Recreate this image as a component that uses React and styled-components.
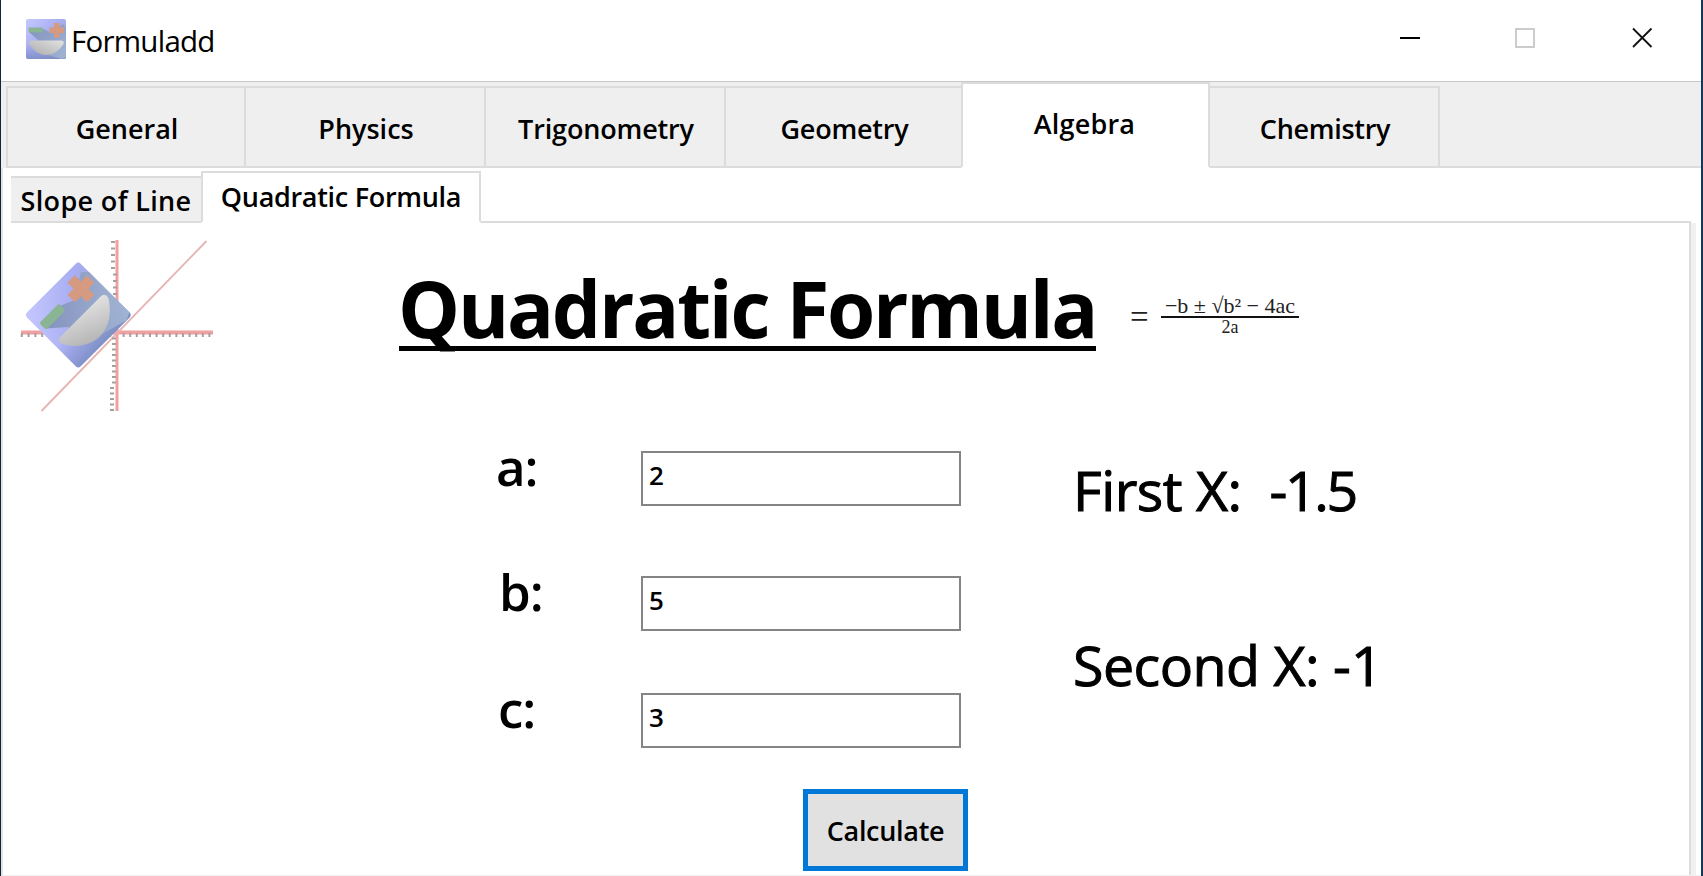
import React, { useState } from 'react';
import styled, { createGlobalStyle } from 'styled-components';

const mainTabs = [
    { name: 'General', width: 238, spacing: 0 },
    { name: 'Physics', width: 240, spacing: 0 },
    { name: 'Trigonometry', width: 240, spacing: -0.15 },
    { name: 'Geometry', width: 237, spacing: -0.2 },
    { name: 'Algebra', width: 249, spacing: 0.2 },
    { name: 'Chemistry', width: 230, spacing: -0.3 },
];

const subTabs = [
    { name: 'Slope of Line', width: 190, spacing: 0.35 },
    { name: 'Quadratic Formula', width: 280, spacing: -0.3 },
];

const ticks = [1, 2, 3, 4, 5, 6, 7, 8, 9, 10, 11, 12, 13, 14];

function BowlArt() {
    return (
        <>
            <defs>
                <linearGradient id="tile" x1="0" y1="0" x2="1" y2="1">
                    <stop offset="0" stopColor="#c5c8ff" />
                    <stop offset=".45" stopColor="#a9aef2" />
                    <stop offset="1" stopColor="#8fa3c8" />
                </linearGradient>
                <linearGradient id="tileEdge" x1="0" y1="0" x2="0" y2="1">
                    <stop offset="0" stopColor="#7d8fc4" stopOpacity="0" />
                    <stop offset="1" stopColor="#7386bd" stopOpacity=".7" />
                </linearGradient>
                <linearGradient id="shade" x1="0" y1="0" x2="1" y2="1">
                    <stop offset="0" stopColor="#7586ad" />
                    <stop offset=".5" stopColor="#8fa1c3" />
                    <stop offset="1" stopColor="#a9bbd8" />
                </linearGradient>
                <linearGradient id="bowl" x1="0" y1="1" x2="1" y2="0">
                    <stop offset="0" stopColor="#ababab" />
                    <stop offset="1" stopColor="#e2e2e2" />
                </linearGradient>
            </defs>
            <rect width="40" height="40" rx="2" fill="url(#tile)" />
            <rect y="24" width="40" height="16" rx="2" fill="url(#tileEdge)" />
            <path d="M3 13 L17 10 L24 13 L37 5 L40 8 V38 L36 40 L22 36 L5 26 L12 21 Z" fill="url(#shade)" opacity=".85" />
            <rect x="2.500" y="8.500" width="14.500" height="5" rx="1" fill="#8ab594" />
            <path d="M28 4 h5.500 v4.500 h4.500 v5.500 h-4.500 v4.500 h-5.500 v-4.500 h-4.500 v-5.500 h4.500 z" fill="#d59a80" />
            <path d="M3 24 Q2.500 21.500 6 21.500 H35 Q38.500 21.500 37.500 25 C33 32 27 36 20 36 C13 36 6 31 3 24 Z" fill="url(#bowl)" />
        </>
    );
}

export default function App() {
    const [mainTab, setMainTab] = useState('Algebra');
    const [subTab, setSubTab] = useState('Quadratic Formula');

    return (
        <Window>
            <GlobalStyle />
            <TitleBar>
                <AppIcon viewBox="0 0 40 40"><BowlArt /></AppIcon>
                <AppName>Formuladd</AppName>
                <WindowButtons viewBox="0 0 254 22">
                    <path d="M0 11 h20" stroke="#000" strokeWidth="2" />
                    <rect x="116" y="2" width="18" height="18" fill="none" stroke="#ccc" strokeWidth="2" />
                    <path d="M233 1.500 l18.500 18.500 M251.500 1.500 l-18.500 18.500" stroke="#111" strokeWidth="1.800" />
                </WindowButtons>
            </TitleBar>

            <MainTabs>
                {
                    mainTabs.map((tab) => (
                        <MainTab key={tab.name} $width={tab.width} $spacing={tab.spacing} $active={tab.name === mainTab} onClick={() => setMainTab(tab.name)}>
                            {tab.name}
                        </MainTab>
                    ))
                }
                <TabFiller />
            </MainTabs>

            <Body>
                <SubTabs>
                    {
                        subTabs.map((tab) => (
                            <SubTab key={tab.name} $width={tab.width} $spacing={tab.spacing} $active={tab.name === subTab} onClick={() => setSubTab(tab.name)}>
                                {tab.name}
                            </SubTab>
                        ))
                    }
                    <SubFiller />
                </SubTabs>

                <Panel>
                    <Logo viewBox="0 0 200 180">
                        <g fill="none" stroke="#f0a0a0">
                            <path d="M106 2 V173" strokeWidth="3" />
                            <path d="M10 94.500 H202" strokeWidth="4" />
                            <path d="M30.500 173 L195.500 3" strokeWidth="1.800" stroke="#e6b3b3" />
                        </g>
                        <g stroke="#a5a0a0" strokeWidth="2">
                            {
                                ticks.map((n) => (
                                    <React.Fragment key={n}>
                                        <path d={`M${106 + n * 6.6} 95 v4`} />
                                        <path d={`M${106 - n * 6.8} 95 v4`} />
                                        <path d={`M${n > 9 ? 100 : 102} ${95 - n * 6.5} h4`} />
                                        <path d={`M${n > 9 ? 99 : 101} ${95 + n * 5.5} h4`} />
                                    </React.Fragment>
                                ))
                            }
                        </g>
                        <g transform="translate(13.500 77) rotate(-45) scale(1.900)">
                            <BowlArt />
                        </g>
                    </Logo>

                    <Content>
                        <Heading>
                            <Title>Quadratic Formula</Title>
                            <Equation>
                                <Equals>=</Equals>
                                <Fraction>
                                    <Numerator>−b ± √b² − 4ac</Numerator>
                                    <Denominator>2a</Denominator>
                                </Fraction>
                            </Equation>
                        </Heading>

                        <Columns>
                            <Form>
                                <Field>
                                    <FieldLabel $shift={0}>a:</FieldLabel>
                                    <Input defaultValue="2" />
                                </Field>
                                <Field $gap={70}>
                                    <FieldLabel $shift={3}>b:</FieldLabel>
                                    <Input defaultValue="5" />
                                </Field>
                                <Field $gap={62}>
                                    <FieldLabel $shift={2}>c:</FieldLabel>
                                    <Input defaultValue="3" />
                                </Field>
                            </Form>
                            <Results>
                                <Result>First X:{'\u00a0 '}<Value $spacing={-2.4}>-1.5</Value></Result>
                                <Result>Second X: <Value $spacing={0}>-1</Value></Result>
                            </Results>
                        </Columns>
                        <Calculate>Calculate</Calculate>
                    </Content>
                </Panel>
            </Body>
        </Window>
    );
}

const GlobalStyle = createGlobalStyle`
    * {
        box-sizing: border-box;
    }
    body {
        margin: 0;
        overflow: hidden;
        font-family: "Open Sans", "Noto Sans", sans-serif;
        color: #000;
    }
`;

const Window = styled.div`
    width: 1703px;
    height: 876px;
    display: flex;
    flex-direction: column;
    border-left: 1px solid #14243a;
    border-right: 2px solid #14385c;
    background-color: #fff;
`;

const TitleBar = styled.header`
    height: 82px;
    flex-shrink: 0;
    display: flex;
    align-items: flex-start;
    padding: 19px 47px 0 25px;
    border-bottom: 1px solid #c4c8c8;
`;

const AppIcon = styled.svg`
    width: 40px;
    height: 40px;
    filter: blur(.5px);
`;

const AppName = styled.span`
    margin-left: 5px;
    font-size: 29.5px;
    line-height: 44px;
    letter-spacing: -.75px;
`;

const WindowButtons = styled.svg`
    width: 254px;
    height: 22px;
    margin: 8px 0 0 auto;
`;

const MainTabs = styled.nav`
    height: 86px;
    flex-shrink: 0;
    display: flex;
    padding-left: 5px;
    background-color: #efefef;
`;

const TabBase = styled.button`
    all: unset;
    box-sizing: border-box;
    width: ${({ $width }) => $width}px;
    flex-shrink: 0;
    text-align: center;
    font-weight: 600;
    font-size: 27px;
    line-height: 38px;
    letter-spacing: ${({ $spacing }) => $spacing}px;
    white-space: nowrap;
    border: 2px solid #dcdcdc;
    border-bottom-color: ${({ $active }) => $active ? '#fff' : '#dcdcdc'};
    background-color: ${({ $active }) => $active ? '#fff' : '#efefef'};
`;

const MainTab = styled(TabBase)`
    height: ${({ $active }) => $active ? 86 : 82}px;
    margin-top: ${({ $active }) => $active ? 0 : 4}px;
    padding: ${({ $active }) => $active ? '0 2px 3px 0' : '4px 0 0 2px'};
    border-right-width: ${({ $active }) => $active ? 2 : 0}px;
    &:nth-last-child(2) {
        border-left-width: 0;
        border-right-width: 2px;
    }
`;

const TabFiller = styled.div`
    flex: 1;
    border-bottom: 2px solid #dcdcdc;
`;

const Body = styled.main`
    flex: 1;
    display: flex;
    flex-direction: column;
    padding: 3px 5px 0 8px;
    border-left: 2px solid #e4e4e4;
    border-bottom: 1px solid #f0f0f0;
`;

const SubTabs = styled.nav`
    height: 52px;
    flex-shrink: 0;
    display: flex;
    align-items: flex-end;
`;

const SubTab = styled(TabBase)`
    height: ${({ $active }) => $active ? 52 : 47}px;
    padding-top: ${({ $active }) => $active ? 0 : 3}px;
    border-left-width: ${({ $active }) => $active ? 2 : 0}px;
    border-right-width: ${({ $active }) => $active ? 2 : 0}px;
`;

const SubFiller = styled.div`
    flex: 1;
    margin-right: 5px;
    border-bottom: 2px solid #dcdcdc;
`;

const Panel = styled.section`
    flex: 1;
    display: flex;
    border-right: 2px solid #dcdcdc;
    margin-right: 5px;
    box-shadow: 5px 0 0 #f1f1f1;
`;

const Logo = styled.svg`
    width: 200px;
    height: 180px;
    margin-top: 15px;
    flex-shrink: 0;
    overflow: visible;
    filter: blur(.6px);
`;

const Content = styled.div`
    flex: 1;
    display: flex;
    flex-direction: column;
    padding-left: 188px;
`;

const Heading = styled.div`
    display: flex;
    height: 180px;
    padding-top: 37px;
`;

const Title = styled.h1`
    width: 697px;
    height: 91px;
    margin: 0;
    border-bottom: 5px solid #000;
    font-size: 78px;
    font-weight: 700;
    line-height: 97px;
    letter-spacing: -2.2px;
    text-indent: -1px;
    white-space: nowrap;
`;

const Equation = styled.div`
    display: flex;
    align-items: flex-start;
    margin: 34px 0 0 34px;
    font-family: "Liberation Serif", serif;
    font-size: 22px;
    color: #222;
`;

const Equals = styled.span`
    width: 31px;
    font-size: 33px;
    line-height: 46px;
`;

const Fraction = styled.div`
    width: 138px;
    text-align: center;
    white-space: nowrap;
`;

const Numerator = styled.div`
    height: 24px;
    line-height: 24px;
    border-bottom: 2px solid #111;
`;

const Denominator = styled.div`
    font-size: 18px;
    line-height: 18px;
`;

const Columns = styled.div`
    display: flex;
    padding: 48px 0 0 97px;
`;

const Form = styled.div`
    width: 577px;
`;

const Field = styled.label`
    display: flex;
    height: 55px;
    margin-top: ${({ $gap }) => $gap || 0}px;
`;

const FieldLabel = styled.span`
    width: 145px;
    padding-left: ${({ $shift }) => $shift}px;
    font-size: 51px;
    font-weight: 600;
    line-height: 31px;
    letter-spacing: -1px;
`;

const Input = styled.input`
    width: 320px;
    height: 55px;
    padding: 0 5px 7px 6px;
    border: 2px solid #858585;
    border-radius: 0;
    outline: none;
    font-family: inherit;
    font-size: 26px;
    font-weight: 600;
`;

const Results = styled.div`
    display: flex;
    flex-direction: column;
    gap: 111px;
    padding-top: 7px;
`;

const Result = styled.span`
    font-size: 55.5px;
    line-height: 64px;
    letter-spacing: -.5px;
    white-space: nowrap;
    -webkit-text-stroke: 1px #000;
`;

const Value = styled.span`
    letter-spacing: ${({ $spacing }) => $spacing}px;
`;

const Calculate = styled.button`
    width: 165px;
    height: 82px;
    flex-shrink: 0;
    margin: 41px 0 0 404px;
    padding: 0;
    border: 5px solid #0078d7;
    background-color: #e1e1e1;
    font-family: inherit;
    font-size: 27px;
    font-weight: 600;
    letter-spacing: -.3px;
    color: #000;
`;
